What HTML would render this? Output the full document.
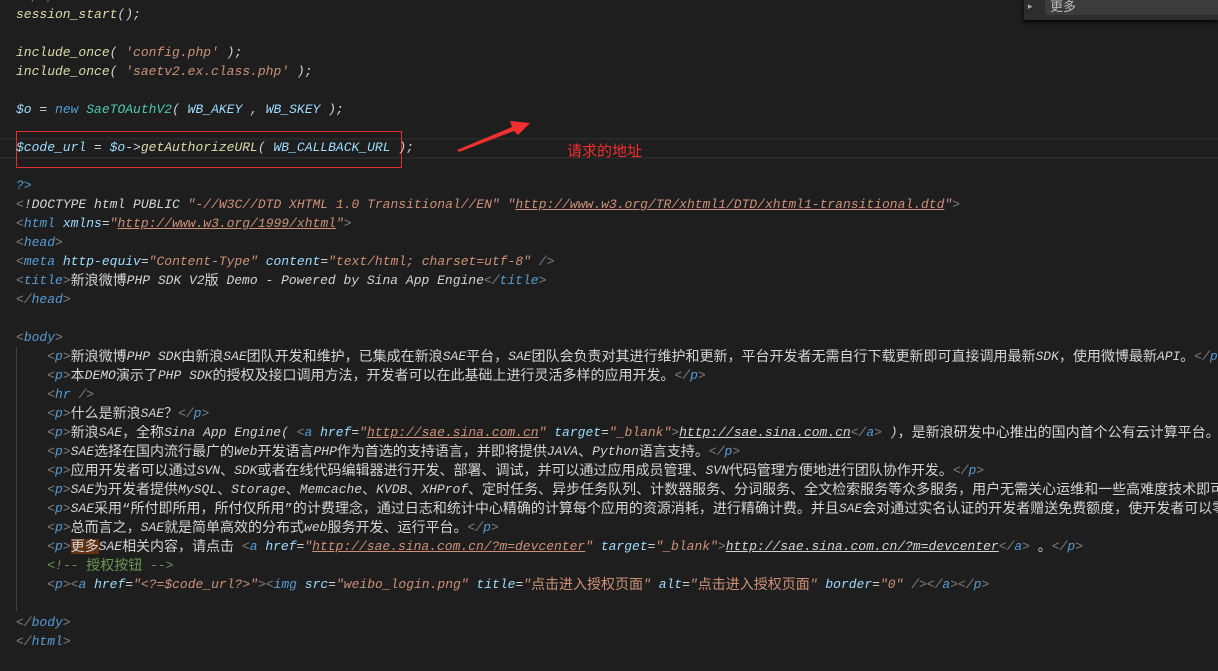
<!DOCTYPE html>
<html><head><meta charset="utf-8"><style>
body{margin:0;width:1218px;height:671px;background:#1e1e1e;overflow:hidden;position:relative;font-family:"Liberation Mono","Noto Sans CJK SC",monospace;}
#code{position:absolute;left:16px;top:-14px;font-size:13px;line-height:19px;white-space:pre;color:#d4d4d4;font-style:italic;}
.g{color:#808080}.t{color:#569cd6}.a{color:#9cdcfe}.s{color:#ce9178}.f{color:#dcdcaa}.c{color:#4ec9b0}.m{color:#6a9955}
.u{text-decoration:underline}
.k{font-size:14px;font-style:normal;display:inline-block;height:19px;line-height:19px;vertical-align:top;position:relative;top:2px}
</style></head><body>
<div style="position:absolute;left:0;top:138px;width:1218px;height:17px;border-top:2px solid #282828;border-bottom:2px solid #282828"></div>
<div style="position:absolute;left:16px;top:347px;width:1px;height:264px;background:#404040"></div>
<div style="position:absolute;left:16px;top:131px;width:384px;height:35px;border:1px solid #e03030"></div>
<svg style="position:absolute;left:450px;top:115px" width="90" height="40"><polygon points="7,35 62,12 60,6 80,8 68,20 64,16 9,37" fill="#f03030"/></svg>
<div style="position:absolute;left:567px;top:140px;font-family:'Noto Sans CJK SC',sans-serif;font-size:15px;color:#f03030">请求的地址</div>
<div style="position:absolute;left:1024px;top:0;width:194px;height:20px;background:#2d2d2d;box-shadow:0 2px 4px #000"><div style="position:absolute;left:4px;top:2px;color:#aaa;font-size:9px">&#9656;</div><div style="position:absolute;left:21px;top:0;width:173px;height:15px;background:#3c3c3c;color:#bbb;font-family:'Noto Sans CJK SC',sans-serif;font-size:13px;line-height:11px;padding-left:5px">更多</div></div>
<div id="code"><span class="g">&lt;?php</span>
<span class="f">session_start</span>();

<span class="f">include_once</span>( <span class="s">'config.php'</span> );
<span class="f">include_once</span>( <span class="s">'saetv2.ex.class.php'</span> );

<span class="a">$o</span> = <span class="t">new</span> <span class="c">SaeTOAuthV2</span>( <span class="a">WB_AKEY</span> , <span class="a">WB_SKEY</span> );

<span class="a">$code_url</span> = <span class="a">$o</span>-&gt;<span class="f">getAuthorizeURL</span>( <span class="a">WB_CALLBACK_URL</span> );

<span class="t">?&gt;</span>
<span class="g">&lt;</span>!DOCTYPE html PUBLIC <span class="s">"-//W3C//DTD XHTML 1.0 Transitional//EN"</span> <span class="s">"<span class="u">http://www.w3.org/TR/xhtml1/DTD/xhtml1-transitional.dtd</span>"</span><span class="g">&gt;</span>
<span class="g">&lt;</span><span class="t">html</span> <span class="a">xmlns</span>=<span class="s">"<span class="u">http://www.w3.org/1999/xhtml</span>"</span><span class="g">&gt;</span>
<span class="g">&lt;</span><span class="t">head</span><span class="g">&gt;</span>
<span class="g">&lt;</span><span class="t">meta</span> <span class="a">http-equiv</span>=<span class="s">"Content-Type"</span> <span class="a">content</span>=<span class="s">"text/html; charset=utf-8"</span> <span class="g">/&gt;</span>
<span class="g">&lt;</span><span class="t">title</span><span class="g">&gt;</span>新浪微博PHP SDK V2版 Demo - Powered by Sina App Engine<span class="g">&lt;/</span><span class="t">title</span><span class="g">&gt;</span>
<span class="g">&lt;/</span><span class="t">head</span><span class="g">&gt;</span>

<span class="g">&lt;</span><span class="t">body</span><span class="g">&gt;</span>
    <span class="g">&lt;</span><span class="t">p</span><span class="g">&gt;</span>新浪微博PHP SDK由新浪SAE团队开发和维护，已集成在新浪SAE平台，SAE团队会负责对其进行维护和更新，平台开发者无需自行下载更新即可直接调用最新SDK，使用微博最新API。<span class="g">&lt;/</span><span class="t">p</span><span class="g">&gt;</span>
    <span class="g">&lt;</span><span class="t">p</span><span class="g">&gt;</span>本DEMO演示了PHP SDK的授权及接口调用方法，开发者可以在此基础上进行灵活多样的应用开发。<span class="g">&lt;/</span><span class="t">p</span><span class="g">&gt;</span>
    <span class="g">&lt;</span><span class="t">hr</span> <span class="g">/&gt;</span>
    <span class="g">&lt;</span><span class="t">p</span><span class="g">&gt;</span>什么是新浪SAE？<span class="g">&lt;/</span><span class="t">p</span><span class="g">&gt;</span>
    <span class="g">&lt;</span><span class="t">p</span><span class="g">&gt;</span>新浪SAE，全称Sina App Engine( <span class="g">&lt;</span><span class="t">a</span> <span class="a">href</span>=<span class="s">"<span class="u">http://sae.sina.com.cn</span>"</span> <span class="a">target</span>=<span class="s">"_blank"</span><span class="g">&gt;</span><span class="u">http://sae.sina.com.cn</span><span class="g">&lt;/</span><span class="t">a</span><span class="g">&gt;</span> )，是新浪研发中心推出的国内首个公有云计算平台。<span class="g">&lt;/</span><span class="t">p</span><span class="g">&gt;</span>
    <span class="g">&lt;</span><span class="t">p</span><span class="g">&gt;</span>SAE选择在国内流行最广的Web开发语言PHP作为首选的支持语言，并即将提供JAVA、Python语言支持。<span class="g">&lt;/</span><span class="t">p</span><span class="g">&gt;</span>
    <span class="g">&lt;</span><span class="t">p</span><span class="g">&gt;</span>应用开发者可以通过SVN、SDK或者在线代码编辑器进行开发、部署、调试，并可以通过应用成员管理、SVN代码管理方便地进行团队协作开发。<span class="g">&lt;/</span><span class="t">p</span><span class="g">&gt;</span>
    <span class="g">&lt;</span><span class="t">p</span><span class="g">&gt;</span>SAE为开发者提供MySQL、Storage、Memcache、KVDB、XHProf、定时任务、异步任务队列、计数器服务、分词服务、全文检索服务等众多服务，用户无需关心运维和一些高难度技术即可
    <span class="g">&lt;</span><span class="t">p</span><span class="g">&gt;</span>SAE采用“所付即所用，所付仅所用”的计费理念，通过日志和统计中心精确的计算每个应用的资源消耗，进行精确计费。并且SAE会对通过实名认证的开发者赠送免费额度，使开发者可以零
    <span class="g">&lt;</span><span class="t">p</span><span class="g">&gt;</span>总而言之，SAE就是简单高效的分布式web服务开发、运行平台。<span class="g">&lt;/</span><span class="t">p</span><span class="g">&gt;</span>
    <span class="g">&lt;</span><span class="t">p</span><span class="g">&gt;</span><span style="background:#613214">更多</span>SAE相关内容，请点击 <span class="g">&lt;</span><span class="t">a</span> <span class="a">href</span>=<span class="s">"<span class="u">http://sae.sina.com.cn/?m=devcenter</span>"</span> <span class="a">target</span>=<span class="s">"_blank"</span><span class="g">&gt;</span><span class="u">http://sae.sina.com.cn/?m=devcenter</span><span class="g">&lt;/</span><span class="t">a</span><span class="g">&gt;</span> 。<span class="g">&lt;/</span><span class="t">p</span><span class="g">&gt;</span>
    <span class="m">&lt;!-- 授权按钮 --&gt;</span>
    <span class="g">&lt;</span><span class="t">p</span><span class="g">&gt;&lt;</span><span class="t">a</span> <span class="a">href</span>=<span class="s">"&lt;?=$code_url?&gt;"</span><span class="g">&gt;&lt;</span><span class="t">img</span> <span class="a">src</span>=<span class="s">"weibo_login.png"</span> <span class="a">title</span>=<span class="s">"点击进入授权页面"</span> <span class="a">alt</span>=<span class="s">"点击进入授权页面"</span> <span class="a">border</span>=<span class="s">"0"</span> <span class="g">/&gt;&lt;/</span><span class="t">a</span><span class="g">&gt;&lt;/</span><span class="t">p</span><span class="g">&gt;</span>

<span class="g">&lt;/</span><span class="t">body</span><span class="g">&gt;</span>
<span class="g">&lt;/</span><span class="t">html</span><span class="g">&gt;</span></div>
<script>
(function(){
var root=document.getElementById('code');
var w=document.createTreeWalker(root,NodeFilter.SHOW_TEXT,null,false);var nodes=[];
while(w.nextNode())nodes.push(w.currentNode);
var re=/[\u3000-\u303f\u4e00-\u9fff\uff00-\uffef\u201c\u201d]+/g;
nodes.forEach(function(n){var t=n.nodeValue;re.lastIndex=0;if(!re.test(t))return;re.lastIndex=0;
var f=document.createDocumentFragment(),last=0,m;
while((m=re.exec(t))){if(m.index>last)f.appendChild(document.createTextNode(t.slice(last,m.index)));
var s=document.createElement('span');s.className='k';s.textContent=m[0];f.appendChild(s);last=m.index+m[0].length;}
if(last<t.length)f.appendChild(document.createTextNode(t.slice(last)));
n.parentNode.replaceChild(f,n);});
})();
</script>
</body></html>
